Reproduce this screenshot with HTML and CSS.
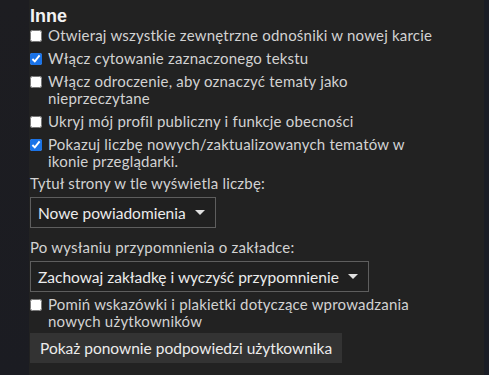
FILE: index.html
```html
<!DOCTYPE html>
<html lang="pl">
<head>
<meta charset="utf-8">
<link rel="stylesheet" href="styles.css">
</head>
<body>
<div class="layout">
  <div class="side-left"></div>
  <main class="main">
    <h2 class="title">Inne</h2>
    <label class="opt"><input type="checkbox"><span>Otwieraj wszystkie zewnętrzne odnośniki w nowej karcie</span></label>
    <label class="opt"><input type="checkbox" checked><span>Włącz cytowanie zaznaczonego tekstu</span></label>
    <label class="opt"><input type="checkbox"><span>Włącz odroczenie, aby oznaczyć tematy jako nieprzeczytane</span></label>
    <label class="opt"><input type="checkbox"><span>Ukryj mój profil publiczny i funkcje obecności</span></label>
    <label class="opt"><input type="checkbox" checked><span>Pokazuj liczbę nowych/zaktualizowanych tematów w ikonie przeglądarki.</span></label>
    <div class="field-label first">Tytuł strony w tle wyświetla liczbę:</div>
    <div class="select"><span>Nowe powiadomienia</span><span class="caret"></span></div>
    <div class="field-label">Po wysłaniu przypomnienia o zakładce:</div>
    <div class="select"><span>Zachowaj zakładkę i wyczyść przypomnienie</span><span class="caret"></span></div>
    <label class="opt opt-last"><input type="checkbox"><span>Pomiń wskazówki i plakietki dotyczące wprowadzania nowych użytkowników</span></label>
    <div><button class="btn" type="button">Pokaż ponownie podpowiedzi użytkownika</button></div>
  </main>
  <div class="side-right"></div>
</div>
</body>
</html>
```
FILE: styles.css
```css
html, body {
  margin: 0;
  padding: 0;
  height: 100%;
  background: #1c1c20;
}
.layout {
  display: flex;
  height: 375px;
  overflow: hidden;
}
.side-left {
  width: 29px;
  flex: none;
  background: linear-gradient(180deg, #1d1d21 0%, #1b1c22 100%);
}
.side-right {
  width: 5px;
  flex: none;
  background: #1a1d25;
}
.main {
  flex: 1;
  background: #222222;
  padding: 5px 0 0 1px;
  font-family: "Lato", "Noto Sans", sans-serif;
  font-size: 15px;
  letter-spacing: 0.2px;
  color: #d2d2d2;
  display: flex;
  flex-direction: column;
  align-items: flex-start;
}
.title {
  margin: 0;
  font-family: "Liberation Sans", Arial, sans-serif;
  font-weight: bold;
  font-size: 18px;
  line-height: 22px;
  letter-spacing: 0;
  color: #f2f2f2;
}
.opt {
  display: flex;
  align-items: flex-start;
  gap: 6px;
  line-height: 17px;
  margin-bottom: 6px;
}
.opt span {
  max-width: 400px;
}
.opt input {
  margin: 3px 0 0 0;
  width: 12px;
  height: 12px;
  flex: none;
  accent-color: #1a73e8;
}
.field-label {
  line-height: 17px;
  margin: 11px 0 0 0;
}
.field-label.first {
  margin-top: -1px;
}
.select {
  display: flex;
  align-items: center;
  gap: 9px;
  box-sizing: border-box;
  height: 31px;
  margin-top: 5px;
  padding: 0 10px 0 7px;
  border: 1px solid #5e5e5e;
  background: #202020;
  color: #ececec;
  font-size: 15.5px;
  letter-spacing: 0;
}
.caret {
  width: 0;
  height: 0;
  border-left: 5px solid transparent;
  border-right: 5px solid transparent;
  border-top: 5px solid #e0e0e0;
}
.opt-last {
  margin-top: 4px;
}
.btn {
  margin-top: -3px;
  height: 30px;
  padding: 0 10px;
  border: none;
  background: #333333;
  color: #ececec;
  font-family: "Lato", "Noto Sans", sans-serif;
  font-size: 15.5px;
}
```
